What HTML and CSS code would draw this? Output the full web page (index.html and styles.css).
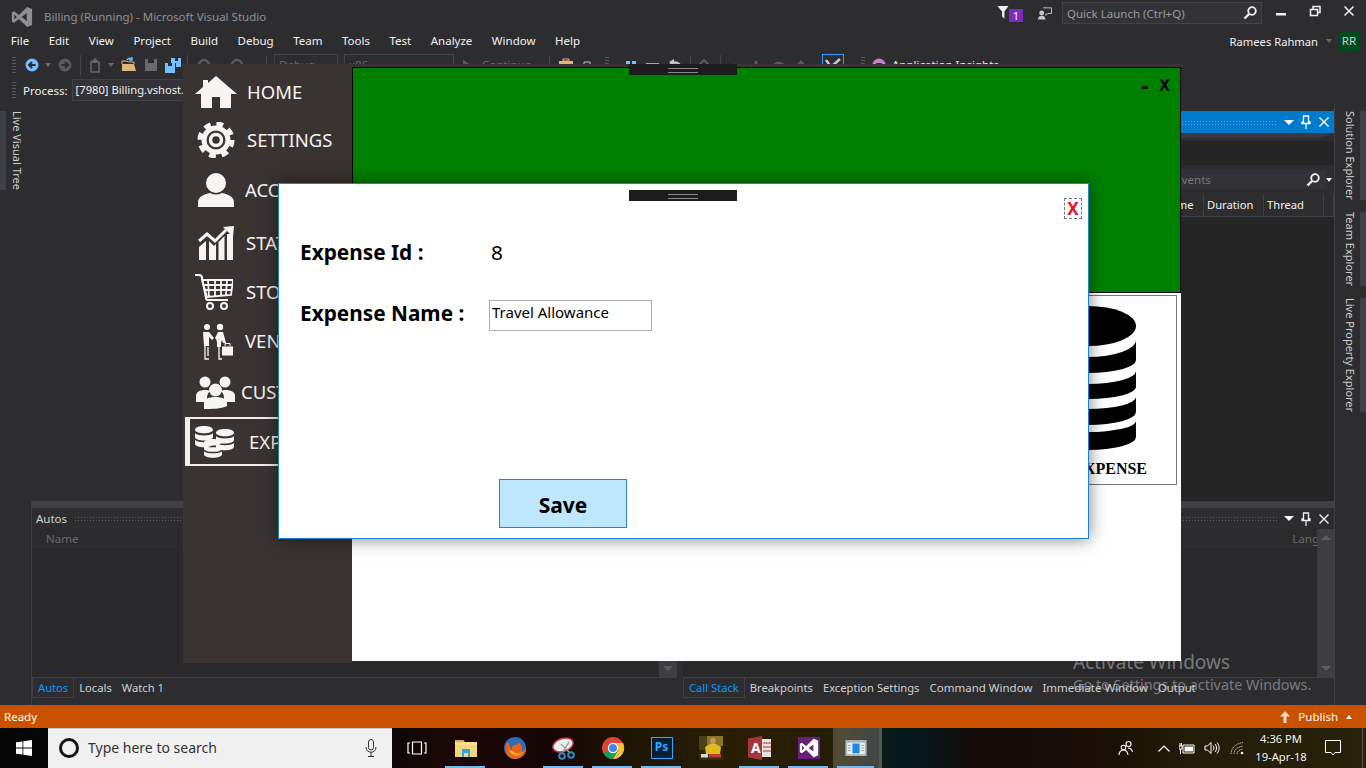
FILE: index.html
```html
<!DOCTYPE html>
<html lang="en">
<head>
    <meta charset="UTF-8">
    <meta name="viewport" content="width=device-width, initial-scale=1.0">
    <title>Billing (Running) - Microsoft Visual Studio</title>
    <link rel="stylesheet" href="styles.css">
</head>
<body>
    <svg class="defs" aria-hidden="true">
        <symbol id="vs-logo" viewBox="0 0 24 24"><path d="M17.6 1 8.6 9.7 3.4 5.6 1 6.8v10.4l2.4 1.2 5.2-4.1 9 8.7 5.4-2.2V3.2zM17.2 7.7v8.6L11.6 12zM3.6 9.2 6.4 12l-2.8 2.8z"/></symbol>
        <symbol id="coin" viewBox="0 0 20 24" preserveAspectRatio="none"><path d="M0 3.500C0 1.500 4.500 0 10 0s10 1.500 10 3.500S15.500 7 10 7 0 5.500 0 3.500zM0 7c2 1.500 6 2 10 2s8-.5 10-2v3.500c0 2-4.500 3.500-10 3.500S0 12.500 0 10.500zM0 13.500c2 1.500 6 2 10 2s8-.5 10-2V17c0 2-4.500 3.500-10 3.500S0 19 0 17z"/></symbol>
    </svg>

    <header class="title-bar">
        <svg class="vs-mark"><use href="#vs-logo"/></svg>
        <span class="title-text">Billing (Running) - Microsoft Visual Studio</span>
        <div class="title-tools">
            <svg class="filter-icon" viewBox="0 0 12 14"><path d="M0 0h12L7.500 6v8L5 11V6z"/></svg>
            <span class="badge">1</span>
            <svg class="feedback-icon" viewBox="0 0 16 14"><circle cx="5" cy="7" r="2.600" fill="#c8c8c8"/><path d="M1 14c0-3 2-4 4-4s4 1 4 4z" fill="#c8c8c8"/><path d="M6.500 1.500h9v6h-4l-2 2v-2" fill="none" stroke="#c8c8c8"/></svg>
            <div class="quick-launch">
                <span>Quick Launch (Ctrl+Q)</span>
                <svg class="search-glass" viewBox="0 0 14 14"><circle cx="9" cy="5" r="3.800" fill="none" stroke="#f1f1f1" stroke-width="1.800"/><path d="M6 8 1.500 12.500" stroke="#f1f1f1" stroke-width="2.400"/></svg>
            </div>
            <div class="win-buttons">
                <svg viewBox="0 0 34 22"><path d="M12 13h10v2.500H12z" fill="#f1f1f1"/></svg>
                <svg viewBox="0 0 34 22"><path d="M12.500 9.500h7v6h-7zM15 9V6.500h7v6h-2" fill="none" stroke="#f1f1f1" stroke-width="1.500"/></svg>
                <svg viewBox="0 0 34 22"><path d="M12.500 6.500l9 9m0-9-9 9" stroke="#f1f1f1" stroke-width="1.500"/></svg>
            </div>
        </div>
    </header>

    <nav class="menu-bar">
        <span>File</span><span>Edit</span><span>View</span><span>Project</span><span>Build</span><span>Debug</span><span>Team</span><span>Tools</span><span>Test</span><span>Analyze</span><span>Window</span><span>Help</span>
        <div class="account">
            <span class="account-name">Ramees Rahman</span>
            <i class="caret caret-dim"></i>
            <span class="avatar">RR</span>
        </div>
    </nav>

    <div class="toolbar toolbar-main">
        <i class="grip"></i>
        <svg class="tb-icon" viewBox="0 0 16 16"><circle cx="8" cy="8" r="6.500" fill="#75beff"/><path d="M11.500 8h-6M8 5 5 8l3 3" fill="none" stroke="#2d2d30" stroke-width="2"/></svg>
        <i class="caret caret-dim tb-caret"></i>
        <svg class="tb-icon tb-forward" viewBox="0 0 16 16"><circle cx="8" cy="8" r="6.500" fill="#5a5a5c"/><path d="M4.500 8h6M8 5l3 3-3 3" fill="none" stroke="#2d2d30" stroke-width="2"/></svg>
        <i class="tb-sep sep-a"></i>
        <svg class="tb-icon" viewBox="0 0 16 16"><path d="M4 5h8v10H4z M8 1v5M5.500 3.500h5" fill="none" stroke="#6a6a6c" stroke-width="1.500"/></svg>
        <i class="caret caret-dim tb-caret"></i>
        <svg class="tb-icon tb-open" viewBox="0 0 16 16"><path d="M1 7h12l2 7H1z" fill="#dcb67a"/><path d="M1 7V4h5l1 1h6v2" fill="none" stroke="#dcb67a"/><path d="M6 3c1-2 4-2.500 5-.5M11 0v3H8" fill="none" stroke="#75beff" stroke-width="1.300"/></svg>
        <svg class="tb-icon tb-save" viewBox="0 0 16 16"><path d="M2 2h12v12H2z" fill="#6a6a6c"/><path d="M5 2h6v4H5z" fill="#2d2d30"/></svg>
        <svg class="tb-icon tb-save" viewBox="0 0 16 16"><path d="M0 6h10v10H0z" fill="#75beff"/><path d="M6 1h10v9h-5V6H6z" fill="#75beff"/><path d="M3 6h4v3H3zM10 1h3v3h-3z" fill="#2d2d30"/></svg>
        <i class="tb-sep sep-b"></i>
        <svg class="tb-icon tb-undo" viewBox="0 0 16 16"><path d="M4 8a5 5 0 1 1 4 5" fill="none" stroke="#5a5a5c" stroke-width="2.500"/></svg>
        <svg class="tb-icon tb-redo" viewBox="0 0 16 16"><path d="M12 8a5 5 0 1 0-4 5" fill="none" stroke="#5a5a5c" stroke-width="2.500"/></svg>
        <i class="tb-sep sep-c"></i>
        <span class="tb-combo combo-config">Debug</span>
        <span class="tb-combo combo-platform">x86</span>
        <span class="tb-continue"><i class="play"></i>Continue</span>
        <i class="tb-sep"></i>
        <svg class="tb-icon tb-folder" viewBox="0 0 16 16"><path d="M1 4h14v10H1z" fill="#dcb67a"/><path d="M5 2h6v2H5z" fill="none" stroke="#dcb67a"/></svg>
        <svg class="tb-icon tb-monitor" viewBox="0 0 16 16"><path d="M1 10h14v4H1z" fill="#c8c8c8"/><path d="M5 10V5h6v5" fill="none" stroke="#c8c8c8"/></svg>
        <i class="grip grip-inline"></i>
        <svg class="tb-icon" viewBox="0 0 16 16"><path d="M3 4h4v12H3zM9 4h4v12H9z" fill="#75beff"/></svg>
        <svg class="tb-icon tb-stop" viewBox="0 0 16 16"><path d="M1 6h13v10H1z" fill="#f38b76"/></svg>
        <svg class="tb-icon tb-stop" viewBox="0 0 16 16"><path d="M3 10c0-4 5-6 9-3v7" fill="none" stroke="#c8c8c8" stroke-width="2.500"/><path d="M7 2v6L2 5z" fill="#c8c8c8"/></svg>
        <i class="tb-sep sep-e"></i>
        <svg class="tb-icon tb-reload" viewBox="0 0 16 16"><path d="M3 8l5-5 5 5M3 13l5-5 5 5" fill="none" stroke="#5a5a5c" stroke-width="2"/></svg>
        <i class="tb-sep sep-f"></i>
        <svg class="tb-icon tb-step" viewBox="0 0 16 16"><path d="M6 6l5 4-5 4z" fill="#5a5a5c"/></svg>
        <svg class="tb-icon tb-step-a" viewBox="0 0 16 16"><path d="M6.500 4h3v5h3l-4.500 5-4.500-5h3z" fill="#5a5a5c"/></svg>
        <svg class="tb-icon tb-step-b" viewBox="0 0 16 16"><path d="M2 12c1-8 11-8 12 0" fill="none" stroke="#5a5a5c" stroke-width="2.500"/></svg>
        <svg class="tb-icon tb-step-c" viewBox="0 0 16 16"><path d="M8 3l4.500 5h-3v6h-3V8h-3z" fill="#5a5a5c"/></svg>
        <span class="tb-box"><svg viewBox="0 0 20 20"><path d="M3 5l5 7 9-8M3 12l4 5M11 11l6 6" fill="none" stroke="#c8c8c8" stroke-width="2.500"/></svg></span>
        <i class="grip grip-box"></i>
        <svg class="tb-icon tb-insights" viewBox="0 0 16 16"><circle cx="8" cy="8" r="6.500" fill="#c586c0"/><path d="M5 6h6l-2 3v3H7V9z" fill="#2d2d30"/></svg>
        <span class="tb-label">Application Insights</span>
    </div>

    <div class="toolbar toolbar-process">
        <i class="grip"></i>
        <span class="process-label">Process:</span>
        <span class="process-combo">[7980] Billing.vshost.exe</span>
    </div>

    <main class="workspace">
        <aside class="rail rail-left">
            <span class="rail-tab">Live Visual Tree</span>
        </aside>

        <div class="center">
            <div class="top-area">
                <section class="tools-panel">
                    <div class="panel-head panel-head-active">
                        <i class="dots"></i>
                        <i class="caret caret-white"></i>
                        <svg class="pin" viewBox="0 0 10 14"><path d="M2.500 1h5v6h1.500v1.500H1V7h1.500zM5 8.500V14" fill="none" stroke="#fff" stroke-width="1.300"/></svg>
                        <svg class="cross" viewBox="0 0 10 10"><path d="M.5.5l9 9m0-9-9 9" stroke="#fff" stroke-width="1.400"/></svg>
                    </div>
                    <div class="tools-band"></div>
                    <div class="tools-graph"></div>
                    <div class="tools-search">
                        <span>Search Events</span>
                        <svg class="search-glass" viewBox="0 0 14 14"><circle cx="9" cy="5" r="3.800" fill="none" stroke="#f1f1f1" stroke-width="1.800"/><path d="M6 8 1.500 12.500" stroke="#f1f1f1" stroke-width="2.400"/></svg>
                        <i class="caret caret-light"></i>
                    </div>
                    <div class="tools-columns">
                        <span class="col-name">Name</span>
                        <span>Duration</span>
                        <span>Thread</span>
                        <span></span>
                    </div>
                </section>
            </div>

            <div class="bottom-area">
                <section class="dock dock-left">
                    <div class="dock-band"></div>
                    <div class="panel-head">
                        <span class="panel-title">Autos</span>
                        <i class="dots"></i>
                    </div>
                    <div class="dock-body">
                        <div class="dock-grid"><div class="grid-head"><span class="grid-name">Name</span></div></div>
                        <div class="scrollbar"><i class="arrow-down"></i></div>
                    </div>
                    <div class="dock-tabs">
                        <span class="tab tab-on">Autos</span><span class="tab">Locals</span><span class="tab">Watch 1</span>
                    </div>
                </section>
                <section class="dock dock-right">
                    <div class="dock-band"></div>
                    <div class="panel-head">
                        <i class="dots"></i>
                        <i class="caret caret-white"></i>
                        <svg class="pin" viewBox="0 0 10 14"><path d="M2.500 1h5v6h1.500v1.500H1V7h1.500zM5 8.500V14" fill="none" stroke="#f1f1f1" stroke-width="1.300"/></svg>
                        <svg class="cross" viewBox="0 0 10 10"><path d="M.5.5l9 9m0-9-9 9" stroke="#f1f1f1" stroke-width="1.400"/></svg>
                    </div>
                    <div class="dock-body">
                        <div class="dock-grid"><div class="grid-head grid-head-end"><span class="grid-lang">Lang</span></div></div>
                        <div class="scrollbar"><i class="arrow-up"></i><i class="arrow-down"></i></div>
                    </div>
                    <div class="dock-tabs">
                        <span class="tab tab-on">Call Stack</span><span class="tab">Breakpoints</span><span class="tab">Exception Settings</span><span class="tab tab-wide">Command Window</span><span class="tab tab-wide">Immediate Window</span><span class="tab">Output</span>
                    </div>
                </section>
            </div>
        </div>

        <aside class="rail rail-right">
            <span class="rail-tab">Solution Explorer</span>
            <span class="rail-tab">Team Explorer</span>
            <span class="rail-tab">Live Property Explorer</span>
        </aside>
    </main>

    <footer class="status-bar">
        <span>Ready</span>
        <div class="publish">
            <svg viewBox="0 0 10 12"><path d="M5 0l5 5.500H6.500V12h-3V5.500H0z" fill="#e8d6c8"/></svg>
            <span>Publish</span>
            <i class="caret caret-up"></i>
        </div>
    </footer>

    <div class="taskbar">
        <div class="start">
            <svg viewBox="0 0 16 16"><path d="M0 2.300 6.500 1.400v6.200H0zM7.300 1.300 16 0v7.600H7.300zM0 8.400h6.500v6.200L0 13.700zM7.300 8.400H16V16l-8.700-1.200z" fill="#fff"/></svg>
        </div>
        <div class="search-box">
            <i class="cortana"></i>
            <span>Type here to search</span>
            <svg viewBox="0 0 12 18"><rect x="3.500" y=".5" width="5" height="10.500" rx="2.500" fill="none" stroke="#333"/><path d="M1 8c0 7 10 7 10 0M6 13v4M3 17.500h6" fill="none" stroke="#333"/></svg>
        </div>
        <div class="task-item">
            <svg class="task-view" viewBox="0 0 20 14"><path d="M5.500 1h9v12h-9zM3 2H1v10h2M17 2h2v10h-2" fill="none" stroke="#fff" stroke-width="1.200"/></svg>
        </div>
        <div class="task-item running">
            <svg viewBox="0 0 24 22"><path d="M1 3h8l2 2h12v15H1z" fill="#f4d67a"/><path d="M1 3h8v2H1z" fill="#d9b04f"/><path d="M8 12h8v8h-2v-4h-4v4H8z" fill="#2fa8e0"/><path d="M1 7h22" stroke="#fbeeb5"/></svg>
        </div>
        <div class="task-item">
            <svg viewBox="0 0 24 24"><circle cx="12" cy="12" r="11" fill="#2c6cb8"/><path d="M4 6c-4 7 0 17 8 17s12-6 11-12c-1 3-3 4-4 4 1-4-1-7-4-9 1 3-1 3-3 3s-4 2-3 4-2 0-2-2c0-2-1-4-3-5z" fill="#e8641b"/><path d="M6 14c2 6 10 8 14 2-4 2-8 2-10-1z" fill="#f6a623"/></svg>
        </div>
        <div class="task-item running">
            <svg viewBox="0 0 24 24"><ellipse cx="11" cy="9" rx="10.500" ry="6.500" transform="rotate(-18 11 9)" fill="#eee" stroke="#b8313a" stroke-width="1.500"/><path d="M9 8l9 9M17 6l-6 10" stroke="#9aa4aa" stroke-width="1.500"/><circle cx="19" cy="19" r="2.800" fill="none" stroke="#2f87c8" stroke-width="2"/><circle cx="10" cy="20" r="2.800" fill="none" stroke="#2f87c8" stroke-width="2"/></svg>
        </div>
        <div class="task-item running">
            <svg viewBox="0 0 24 24"><circle cx="12" cy="12" r="11" fill="#db4437"/><path d="M12 12 2.500 17.500A11 11 0 0 0 12 23l5.500-7z" fill="#0f9d58"/><path d="M12 7h10a11 11 0 0 1-10 16l5.500-9z" fill="#fbc02d"/><circle cx="12" cy="12" r="5.200" fill="#fff"/><circle cx="12" cy="12" r="4" fill="#4285f4"/></svg>
        </div>
        <div class="task-item running">
            <span class="ps-icon">Ps</span>
        </div>
        <div class="task-item">
            <svg class="pes-icon" viewBox="0 0 24 24"><rect width="24" height="24" fill="#2b2410"/><path d="M0 0h24v10L0 14z" fill="#8a7722"/><path d="M0 0h8v14H0z" fill="#4a4014"/><circle cx="14" cy="4.500" r="2.800" fill="#c99468"/><path d="M6 11l6-3.500h4l6 3.500-1 7H7z" fill="#dcbc22"/><path d="M0 18h24v6H0z" fill="#2f2c1a"/><path d="M10 18h12v3.500H10z" fill="#c7372f"/><path d="M2 18h7v3.500H2z" fill="#d8d8d8"/></svg>
        </div>
        <div class="task-item running">
            <svg viewBox="0 0 24 24"><path d="M14 3h9v18h-9z" fill="#e7e2e2"/><path d="M15 7h8M15 11h8M15 15h8" stroke="#a4373a"/><path d="M0 2.500 14 0v24L0 21.500z" fill="#a4373a"/></svg>
            <span class="access-a">A</span>
        </div>
        <div class="task-item running">
            <svg viewBox="0 0 24 24"><rect x="1" y="1" width="22" height="22" fill="#68217a"/><use href="#vs-logo" x="2" y="2" width="20" height="20" fill="#fff"/></svg>
        </div>
        <div class="task-item running active">
            <svg class="app-icon" viewBox="0 0 24 18"><path d="M0 0h24v18H0z" fill="#a9b3b8"/><path d="M2 3h20v13H2z" fill="#e8eef1"/><path d="M8 4h8v11H8z" fill="#1e88e5"/><path d="M3 6h3M3 9h3M3 12h3M18 6h3M18 9h3M18 12h3" stroke="#8aa0ad"/></svg>
        </div>
        <div class="tray">
            <svg class="tray-people" viewBox="0 0 16 16"><circle cx="10.500" cy="4" r="2.500" fill="none" stroke="#fff" stroke-width="1.100"/><circle cx="5.500" cy="7.500" r="2.300" fill="none" stroke="#fff" stroke-width="1.100"/><path d="M1 15c0-3 2-5 4.500-5s4 2 4.500 5M10 8c2 0 4 1.500 4.500 4" fill="none" stroke="#fff" stroke-width="1.100"/></svg>
            <svg class="tray-chevron" viewBox="0 0 12 7"><path d="M.5 6.500 6 1l5.500 5.500" fill="none" stroke="#fff" stroke-width="1.200"/></svg>
            <svg class="tray-battery" viewBox="0 0 16 11"><path d="M4 2h11v8H4z" fill="none" stroke="#fff"/><path d="M5.500 3.500H14v5H5.500z" fill="#fff"/><path d="M0 3v3h3V3zM1 3V0M2.500 3V0M1.500 6v5" stroke="#fff" fill="none"/></svg>
            <svg class="tray-volume" viewBox="0 0 16 14"><path d="M1 5h2.500L7 1.500v11L3.500 9H1z" fill="none" stroke="#fff"/><path d="M9 4.500c1.200 1.500 1.200 3.500 0 5M11 3c2 2.500 2 5.500 0 8M13 1.500c2.800 3.500 2.800 7.500 0 11" fill="none" stroke="#fff"/></svg>
            <svg class="tray-wifi" viewBox="0 0 14 14"><path d="M1 13C1 7 6 2.500 13 1.500M4 13c0-4 3-7 9-8M7 13c0-2.500 2-4 6-5" fill="none" stroke="#b9b9b9" stroke-dasharray="1.500 .6"/><circle cx="12" cy="12" r="1.300" fill="#fff"/></svg>
            <div class="clock"><span>4:36 PM</span><span>19-Apr-18</span></div>
            <svg class="tray-note" viewBox="0 0 16 16"><path d="M.5.5h15v12H10l-2 2.500-2-2.500H.5z" fill="none" stroke="#fff"/></svg>
            <i class="show-desktop"></i>
        </div>
    </div>

    <div class="activate">
        <p class="activate-title">Activate Windows</p>
        <p class="activate-note">Go to Settings to activate Windows.</p>
    </div>

    <!-- the running Billing app, floats over the IDE -->
    <div class="app-window">
        <i class="drag-handle handle-main"></i>
        <nav class="side-nav">
            <a class="nav-item">
                <span class="nav-icon"><svg width="42" height="32" viewBox="0 0 42 32"><path d="M21 0 42 18h-6v14H25V21h-8v11H6V18H0l8-7V4h5v3z" fill="#f7f5f4"/></svg></span>
                <span class="nav-text text-wide">HOME</span>
            </a>
            <a class="nav-item">
                <span class="nav-icon"><svg width="42" height="36" viewBox="-21 -18 42 36"><circle r="12" fill="none" stroke="#f7f5f4" stroke-width="5"/><circle r="15.500" fill="none" stroke="#f7f5f4" stroke-width="6" stroke-dasharray="6.500 5.670"/><circle r="5.500" fill="none" stroke="#f7f5f4" stroke-width="3.500"/></svg></span>
                <span class="nav-text text-wide">SETTINGS</span>
            </a>
            <a class="nav-item">
                <span class="nav-icon"><svg width="36" height="34" viewBox="0 0 36 34"><ellipse cx="18" cy="10" rx="10" ry="10" fill="#f7f5f4"/><path d="M0 34v-5c0-5 6-8 12-9 4 2 8 2 12 0 6 1 12 4 12 9v5z" fill="#f7f5f4"/></svg></span>
                <span class="nav-text text-acc">ACC</span>
            </a>
            <a class="nav-item">
                <span class="nav-icon"><svg width="36" height="34" viewBox="0 0 36 34" fill="#f7f5f4"><path d="M1 21l7-6v19H1zM11 15l5 5 2-2v16h-7zM20.500 16l6-6v24h-6zM29 8h6v26h-6z"/><path d="M1 15l8-7 8 7 11-11" fill="none" stroke="#f7f5f4" stroke-width="3"/><path d="M25 1 36 0l-1 11z"/></svg></span>
                <span class="nav-text">STAT</span>
            </a>
            <a class="nav-item">
                <span class="nav-icon icon-cart"><svg width="38" height="36" viewBox="0 0 38 36"><path d="M0 1h4c2 0 3 1 3 3l4 20c0 1 1 2 2 2h20" fill="none" stroke="#f7f5f4" stroke-width="2"/><path d="M7 6h31l-2 15-24 2zM13 6l1 17M20 6v16M26 6v15M32 6l-1 15M8 11h29M9 16h27" fill="none" stroke="#f7f5f4" stroke-width="1.800"/><circle cx="15" cy="32" r="3" fill="none" stroke="#f7f5f4" stroke-width="2"/><circle cx="29" cy="32" r="3" fill="none" stroke="#f7f5f4" stroke-width="2"/></svg></span>
                <span class="nav-text">STO</span>
            </a>
            <a class="nav-item">
                <span class="nav-icon icon-vendor"><svg width="32" height="37" viewBox="0 0 32 37" fill="#f7f5f4"><circle cx="5" cy="4" r="3"/><circle cx="18" cy="4" r="3.200"/><path d="M1 9h6l5 6-2 2-3-3v9H2z"/><path d="M13 15l3-6h5l3 11h-3l-1-3-1 3v4h-4v-5l-1-3z"/><path d="M3 23v13h4M6 24v9M17 24v12h3M21 24v6" fill="none" stroke="#f7f5f4" stroke-width="1.300"/><path d="M19.500 23h12v10h-12z" stroke="#393432"/><path d="M23 23v-2.500h5V23" fill="none" stroke="#f7f5f4"/></svg></span>
                <span class="nav-text text-ven">VEN</span>
            </a>
            <a class="nav-item">
                <span class="nav-icon"><svg width="39" height="33" viewBox="0 0 39 33"><circle cx="9" cy="6" r="5.500" fill="#f7f5f4"/><circle cx="29" cy="6" r="5.500" fill="#f7f5f4"/><path d="M0 26v-6c0-4 4-6 9-6 2 0 4 0 5 1-2 2-3 4-3 7v4zM39 26v-6c0-4-4-6-9-6-2 0-4 0-5 1 2 2 3 4 3 7v4z" fill="#f7f5f4"/><circle cx="19.500" cy="14" r="6.500" fill="#f7f5f4"/><path d="M8 33v-6c0-4 5-6 11.500-6S31 23 31 27v3c-6 3-16 3-23 3z" fill="#f7f5f4"/></svg></span>
                <span class="nav-text text-cust">CUST</span>
            </a>
            <a class="nav-item nav-active">
                <span class="nav-icon icon-coins"><svg width="39" height="32" viewBox="0 0 39 32" fill="#f7f5f4"><use href="#coin" x="0" y="0" width="18" height="25"/><use href="#coin" x="21" y="3" width="18" height="25"/><use href="#coin" x="9" y="13" width="18" height="22"/></svg></span>
                <span class="nav-text text-exp">EXP</span>
            </a>
        </nav>
        <div class="app-content">
            <div class="app-banner">
                <div class="app-controls"><span class="app-min">-</span><span>X</span></div>
            </div>
            <div class="tiles">
                <div class="tile">
                    <svg class="tile-db" width="96" height="145" viewBox="0 0 96 145"><ellipse cx="48" cy="21" rx="48" ry="20"/><path d="M0 35A48 17 0 0 0 96 35V55A48 13 0 0 1 0 55Z"/><path d="M0 66A48 13 0 0 0 96 66V82A48 12 0 0 1 0 82Z"/><path d="M0 92A48 12 0 0 0 96 92V107A48 13 0 0 1 0 107Z"/><path d="M0 116A48 11 0 0 0 96 116V132A48 13 0 0 1 0 132Z"/></svg>
                    <span class="tile-label">EXPENSE</span>
                </div>
            </div>
        </div>
    </div>

    <div class="modal">
        <i class="drag-handle handle-modal"></i>
        <button class="modal-close">X</button>
        <div class="form-row">
            <label>Expense Id :</label>
            <span class="form-value">8</span>
        </div>
        <div class="form-row">
            <label>Expense Name :</label>
            <input class="form-input" type="text" value="Travel Allowance">
        </div>
        <button class="btn-save">Save</button>
    </div>
</body>
</html>
```

FILE: styles.css
```css
* {
    box-sizing: border-box;
}

html, body {
    height: 100%;
}

body {
    margin: 0;
    width: 1366px;
    height: 768px;
    overflow: hidden;
    position: relative;
    display: flex;
    flex-direction: column;
    background: #2d2d30;
    color: #f1f1f1;
    font-family: "Noto Sans", "Open Sans", sans-serif;
    font-size: 12px;
}

i {
    display: block;
}

svg {
    display: block;
    flex: none;
}

.defs {
    position: absolute;
    width: 0;
    height: 0;
}

/* title + menu */
.title-bar {
    height: 30px;
    display: flex;
    align-items: flex-start;
}

.vs-mark {
    width: 22px;
    height: 22px;
    margin: 6px 0 0 11px;
    fill: #8f8f92;
}

.title-text {
    margin: 9px 0 0 11px;
    color: #8f8f92;
    font-size: 11.5px;
}

.title-tools {
    margin-left: auto;
    display: flex;
    align-items: flex-start;
}

.filter-icon {
    width: 14px;
    height: 13px;
    margin-top: 6px;
    fill: #f1f1f1;
}

.badge {
    width: 14px;
    height: 13px;
    margin: 9px 0 0 -1px;
    background: #7b2fb8;
    text-align: center;
    line-height: 13px;
    font-size: 11px;
}

.feedback-icon {
    width: 15px;
    height: 14px;
    margin: 6px 0 0 14px;
}

.quick-launch {
    width: 200px;
    height: 22px;
    margin: 2px 0 0 10px;
    padding: 0 4px;
    display: flex;
    align-items: center;
    justify-content: space-between;
    background: #333337;
    border: 1px solid #434346;
    color: #999;
    font-size: 11.5px;
}

.search-glass {
    width: 14px;
    height: 14px;
}

.win-buttons {
    display: flex;
    margin-left: 2px;
}

.win-buttons svg {
    width: 34px;
    height: 22px;
}

.menu-bar {
    height: 22px;
    display: flex;
    align-items: center;
    padding-left: 1px;
    font-size: 11.5px;
}

.menu-bar > span {
    padding: 0 9.75px;
    margin-bottom: 2px;
}

.account {
    margin-left: auto;
    margin-right: 7px;
    display: flex;
    align-items: center;
    height: 20px;
}

.account-name {
    font-size: 11.2px;
}

.avatar {
    width: 20px;
    height: 20px;
    margin-left: 7px;
    background: #004b1c;
    color: #ccc;
    text-align: center;
    line-height: 19px;
    font-size: 11.5px;
}

.caret {
    width: 0;
    height: 0;
    border-left: 3.500px solid transparent;
    border-right: 3.500px solid transparent;
    border-top: 4px solid #f1f1f1;
}

.caret-dim {
    border-top-color: #6a6a6c;
    margin-left: 8px;
}

.caret-white {
    border-left-width: 5px;
    border-right-width: 5px;
    border-top-width: 5px;
    border-top-color: #fff;
}

.caret-up {
    border-top: 0;
    border-bottom: 4px solid #fff;
    margin-left: 8px;
}

/* toolbars */
.toolbar {
    display: flex;
    align-items: center;
    padding-left: 12px;
}

.toolbar-main {
    height: 25px;
}

.toolbar-process {
    height: 26px;
}

.grip {
    width: 4px;
    height: 18px;
    background-image: radial-gradient(#5a5a5c 0.7px, transparent 0.8px);
    background-size: 2px 3px;
}

.tb-icon {
    width: 16px;
    height: 16px;
}

.toolbar-main > .grip:first-child {
    margin-right: 8px;
}

.tb-caret {
    margin-left: 5px;
}

.tb-forward {
    margin-left: 6px;
}

.tb-sep {
    width: 1px;
    height: 20px;
    background: #46464a;
}

.sep-a {
    margin: 0 6px 0 7px;
}

.tb-open {
    margin-left: 7px;
}

.tb-save {
    margin-left: 6px;
}

.sep-b {
    margin-left: 6px;
}

.tb-undo {
    margin-left: 7px;
}

.tb-redo {
    margin-left: 19px;
}

.sep-c {
    margin: 0 7px 0 20px;
}

.tb-combo {
    height: 22px;
    padding: 2px 4px;
    border: 1px solid #434346;
    color: #6a6a6c;
    font-size: 11.5px;
}

.combo-config {
    width: 64px;
}

.combo-platform {
    width: 110px;
    margin-left: 6px;
}

.tb-continue {
    width: 95px;
    padding-left: 9px;
    display: flex;
    align-items: center;
    color: #6a6a6c;
    font-size: 11.5px;
}

.play {
    margin-right: 11px;
    border-left: 8px solid #5a5a5c;
    border-top: 5px solid transparent;
    border-bottom: 5px solid transparent;
}

.tb-folder {
    margin-left: 8px;
}

.tb-monitor {
    margin-left: 5px;
}

.grip-inline {
    margin: 0 14px 0 10px;
}

.tb-stop {
    margin-left: 6px;
}

.sep-e {
    margin-left: 7px;
}

.tb-reload {
    margin-left: 5px;
}

.sep-f {
    margin-left: 8px;
}

.tb-step {
    margin-left: 7px;
}

.tb-step-a {
    margin-left: 4px;
}

.tb-step-b {
    margin-left: 7px;
}

.tb-step-c {
    margin-left: 6px;
}

.tb-box {
    width: 22px;
    height: 22px;
    margin-left: 13px;
    border: 1px solid #3399ff;
}

.grip-box {
    margin-left: 17px;
}

.tb-insights {
    margin-left: 6px;
}

.tb-label {
    margin-left: 5px;
    font-size: 11.5px;
}

.process-label {
    margin-left: 7px;
    font-size: 11.5px;
}

.process-combo {
    width: 200px;
    height: 22px;
    margin-left: 4px;
    padding: 2px 3px;
    background: #333337;
    border: 1px solid #434346;
    font-size: 11.2px;
}

/* main dock layout */
.workspace {
    flex: 1;
    display: flex;
    min-height: 0;
}

.rail {
    width: 31px;
    flex: none;
    padding-top: 8px;
    display: flex;
    flex-direction: column;
    gap: 12px;
}

.rail-right {
    width: 32px;
    border-left: 1px solid #3f3f46;
    margin-left: -1px;
}

.rail-tab {
    writing-mode: vertical-rl;
    color: #d0d0d0;
    font-size: 11px;
    line-height: 19px;
}

.rail-left .rail-tab {
    border-left: 6px solid #3f3f46;
    padding-left: 2px;
    align-self: flex-start;
}

.rail-right .rail-tab {
    border-right: 6px solid #3f3f46;
    padding-left: 3px;
}

.center {
    flex: 1;
    display: flex;
    flex-direction: column;
    min-width: 0;
}

.top-area {
    height: 398px;
    display: flex;
    justify-content: flex-end;
}

.tools-panel {
    width: 314px;
    margin-top: 8px;
    background: #252526;
}

.panel-head {
    height: 21px;
    display: flex;
    align-items: center;
    gap: 7px;
    padding: 0 4px;
    background: #2d2d30;
}

.panel-head-active {
    height: 22px;
    background: #007acc;
}

.dots {
    flex: 1;
    height: 5px;
    background-image: radial-gradient(#5d5d60 0.7px, transparent 0.8px);
    background-size: 3px 3px;
}

.panel-head-active .dots {
    background-image: radial-gradient(#59a8e0 0.7px, transparent 0.8px);
}

.pin {
    width: 10px;
    height: 14px;
}

.cross {
    width: 10px;
    height: 10px;
    margin: 0 2px 0 1px;
}

.tools-band {
    height: 8px;
    background: #2d2d30;
    border-top: 5px solid #3a3a3e;
    border-right: 17px solid #2d2d30;
}

.tools-graph {
    height: 24px;
    background: #252526;
}

.tools-search {
    height: 29px;
    padding: 5px 3px 5px 0;
    display: flex;
    align-items: center;
    gap: 4px;
    background: #2d2d30;
    color: #777;
}

.tools-search span {
    flex: 1;
    height: 19px;
    padding-left: 115px;
    background: #333337;
    line-height: 19px;
    font-size: 11.5px;
}

.tools-search .search-glass {
    margin-left: -24px;
}

.caret-light {
    margin-left: 2px;
}

.tools-columns {
    height: 23px;
    display: grid;
    grid-template-columns: 183px 60px 60px 1fr;
    border-bottom: 1px solid #3f3f46;
    border-right: 1px solid #3f3f46;
    background: #2d2d30;
    line-height: 21px;
    font-size: 11.2px;
}

.tools-columns span {
    padding-left: 3px;
    border-right: 1px solid #3f3f46;
}

.tools-columns .col-name {
    padding-left: 141px;
}

.bottom-area {
    flex: 1;
    display: flex;
    gap: 6px;
}

.dock {
    display: flex;
    flex-direction: column;
    border-left: 1px solid #3f3f46;
}

.dock-left {
    width: 646px;
}

.dock-right {
    flex: 1;
    border-left: 0;
}

.dock-band {
    height: 7px;
    background: #3f3f46;
}

.panel-title {
    color: #d0d0d0;
    font-size: 11.5px;
}

.dock-body {
    flex: 1;
    display: flex;
    background: #29292b;
    min-height: 0;
    border-bottom: 1px solid #3f3f46;
}

.dock-grid {
    flex: 1;
}

.grid-head {
    height: 19px;
    border-bottom: 1px solid #2f2f32;
    padding-left: 14px;
    color: #6a6a6c;
    font-size: 11.5px;
    line-height: 19px;
    background: #2a2a2c;
}

.grid-head-end {
    display: flex;
    justify-content: flex-end;
    overflow: hidden;
}

.grid-lang {
    margin-right: -2px;
}

.scrollbar {
    width: 18px;
    display: flex;
    flex-direction: column;
    align-items: center;
    justify-content: space-between;
    padding: 6px 0;
    background: #3e3e42;
}

.dock-left .scrollbar {
    justify-content: flex-end;
}

.arrow-up {
    border-left: 5px solid transparent;
    border-right: 5px solid transparent;
    border-bottom: 5px solid #5d5d60;
}

.arrow-down {
    border-left: 5px solid transparent;
    border-right: 5px solid transparent;
    border-top: 5px solid #5d5d60;
}

.dock-tabs {
    height: 27px;
    padding-bottom: 7px;
    display: flex;
    align-items: stretch;
    color: #d0d0d0;
    font-size: 11.2px;
}

.tab {
    padding: 0 5px;
    line-height: 20px;
}

.tab-wide {
    font-size: 11.5px;
}

.tab-on {
    color: #0e97f0;
    background: #2d2d30;
    border: 1px solid #3f3f46;
    border-top: 0;
    line-height: 19px;
}

/* status + windows taskbar */
.status-bar {
    height: 23px;
    flex: none;
    display: flex;
    align-items: center;
    justify-content: space-between;
    padding: 0 14px 0 4px;
    background: #ca5100;
    color: #fff;
    font-size: 11.5px;
}

.publish {
    display: flex;
    align-items: center;
    gap: 8px;
}

.publish svg {
    width: 10px;
    height: 12px;
}

.publish .caret-up {
    margin-left: 0;
}

.taskbar {
    height: 40px;
    flex: none;
    display: flex;
    align-items: stretch;
    background: linear-gradient(90deg, #070707 0%, #0a0808 28%, #1c0705 33%, #140504 40%, #1f1505 46%, #2a1f04 55%, #241c04 62%, #131a14 64%, #041a1e 66%, #150a08 72%, #1a0e06 80%, #251c08 88%, #272208 100%);
}

.start {
    width: 48px;
    display: flex;
    align-items: center;
    justify-content: center;
}

.start svg {
    width: 16px;
    height: 16px;
}

.search-box {
    width: 344px;
    display: flex;
    align-items: center;
    padding: 0 15px 2px 11px;
    background: #f0f0f0;
    border-top: 1px solid #c8c8c8;
    color: #333;
    font-size: 14px;
}

.search-box span {
    flex: 1;
    margin-left: 9px;
}

.search-box svg {
    width: 12px;
    height: 18px;
}

.cortana {
    width: 20px;
    height: 20px;
    border-radius: 50%;
    border: 3px solid #151515;
}

.task-item {
    width: 49px;
    position: relative;
    display: flex;
    align-items: center;
    justify-content: center;
}

.task-item svg {
    width: 24px;
    height: 24px;
}

.task-item .task-view {
    width: 20px;
    height: 14px;
}

.task-item .app-icon {
    width: 22px;
    height: 16px;
}

.running::after {
    content: "";
    position: absolute;
    left: 4px;
    right: 5px;
    bottom: 0;
    height: 2px;
    background: #76b9ed;
}

.active {
    background: rgba(255, 255, 255, 0.2);
    border-right: 3px solid rgba(255, 255, 255, 0.1);
}

.ps-icon {
    width: 22px;
    height: 22px;
    border: 1.500px solid #31a8ff;
    background: #001e36;
    color: #31a8ff;
    text-align: center;
    line-height: 18px;
    font-size: 12px;
    font-weight: 700;
}

.access-a {
    position: absolute;
    left: 16px;
    top: 10px;
    color: #fff;
    font-size: 14px;
    font-weight: 700;
}

.tray {
    flex: 1;
    display: flex;
    align-items: center;
    position: relative;
}

.tray-people {
    width: 16px;
    height: 16px;
    margin-left: 236px;
}

.tray-chevron {
    width: 12px;
    height: 7px;
    margin-left: 24px;
}

.tray-battery {
    width: 16px;
    height: 11px;
    margin-left: 9px;
}

.tray-volume {
    width: 16px;
    height: 14px;
    margin-left: 9px;
}

.tray-wifi {
    width: 14px;
    height: 14px;
    margin-left: 10px;
}

.clock {
    width: 60px;
    margin-left: 7px;
    display: flex;
    flex-direction: column;
    align-items: center;
    line-height: 18px;
    font-size: 11.2px;
    color: #f4f4f4;
}

.tray-note {
    width: 16px;
    height: 16px;
    margin-left: 14px;
}

.show-desktop {
    width: 1px;
    height: 100%;
    margin-left: 21px;
    background: #555;
}

.activate {
    position: absolute;
    left: 1073px;
    top: 649px;
    color: rgba(200, 200, 200, 0.5);
    pointer-events: none;
}

.activate p {
    margin: 0;
}

.activate-title {
    font-size: 19px;
    line-height: 26px;
}

.activate-note {
    font-size: 14.4px;
    line-height: 20px;
}

/* app window */
.app-window {
    position: absolute;
    left: 183px;
    top: 64px;
    width: 1000px;
    height: 599px;
    display: flex;
    align-items: flex-start;
}

.drag-handle {
    position: absolute;
    width: 108px;
    height: 11px;
    background: #1c1c1c;
}

.drag-handle::after {
    content: "";
    position: absolute;
    left: 39px;
    top: 4px;
    width: 30px;
    height: 3px;
    border-top: 1px solid #8a8a8a;
    border-bottom: 1px solid #8a8a8a;
}

.handle-main {
    left: 446px;
    top: 0;
}

.handle-modal {
    left: 350px;
    top: 6px;
}

.side-nav {
    width: 169px;
    height: 599px;
    flex: none;
    padding: 4px 0 0 2px;
    display: grid;
    grid-template-rows: 48px 48px 52px 54px 44px 54px 49px 49px;
    align-content: start;
    background: #393432;
}

.nav-item {
    display: flex;
    align-items: center;
    color: #f4f2f1;
    font-size: 18.5px;
}

.nav-icon {
    width: 61px;
    display: flex;
    justify-content: center;
}

.nav-text {
    margin-bottom: 2px;
}

.text-wide {
    margin-left: 1px;
}

.icon-cart {
    padding-right: 3px;
}

.icon-vendor {
    padding-left: 4px;
}

.text-acc,
.text-ven {
    margin-left: -1px;
}

.text-cust {
    margin-left: -5px;
}

.nav-active {
    border: 2px solid #f0eeee;
    border-left-width: 5px;
    border-right: 0;
}

.icon-coins {
    width: 54px;
    padding-right: 6px;
}

.text-exp {
    margin: 0 0 0 5px;
}

.app-content {
    width: 831px;
    height: 597px;
    padding-right: 2px;
    border-top: 3px solid #393432;
    display: flex;
    flex-direction: column;
}

.app-banner {
    height: 226px;
    flex: none;
    background: #008000;
    border: 1px solid #000;
}

.app-controls {
    display: flex;
    justify-content: flex-end;
    align-items: flex-start;
    gap: 11px;
    padding: 6px 10px 0 0;
    color: #000;
    font-size: 16px;
    font-weight: 700;
}

.app-min {
    font-size: 21px;
    line-height: 23px;
}

.tiles {
    flex: 1;
    display: flex;
    justify-content: flex-end;
    padding: 2px 4px 0 0;
    background: #fff;
}

.tile {
    width: 177px;
    height: 190px;
    border: 1px solid #777;
    padding-top: 9px;
    display: flex;
    flex-direction: column;
    background: #fff;
}

.tile-db {
    margin-left: 39px;
    fill: #000;
}

.tile-label {
    margin-top: 10px;
    padding-right: 29px;
    text-align: right;
    color: #000;
    font-family: "Liberation Serif", serif;
    font-size: 16px;
    font-weight: 700;
}

/* expense dialog */
.modal {
    position: absolute;
    left: 278px;
    top: 183px;
    width: 811px;
    height: 356px;
    padding: 48px 0 10px 21px;
    display: flex;
    flex-direction: column;
    gap: 21px;
    background: #fff;
    border: 1px solid #1e82d2;
    box-shadow: 0 0 16px rgba(0, 0, 0, 0.5);
    color: #000;
}

.modal-close {
    position: absolute;
    right: 6px;
    top: 14px;
    width: 18px;
    height: 21px;
    padding: 0;
    background: #fff;
    border: 1px dashed #777;
    color: #f01020;
    font-family: inherit;
    font-size: 17px;
    font-weight: 700;
    line-height: 18px;
}

.form-row {
    height: 40px;
    display: grid;
    grid-template-columns: 189px 1fr;
    align-items: center;
}

.form-row label {
    font-size: 20.8px;
    font-weight: 700;
}

.form-value {
    padding-left: 2px;
    font-size: 20.8px;
}

.form-input {
    width: 163px;
    height: 31px;
    margin-top: 4px;
    padding: 0 2px 7px;
    border: 1px solid #abadb3;
    border-radius: 0;
    outline: none;
    color: #000;
    font-family: inherit;
    font-size: 15px;
}

.btn-save {
    width: 128px;
    height: 49px;
    margin: auto 0 0 199px;
    padding-top: 4px;
    background: #bee6fd;
    border: 1px solid #3c7fb1;
    color: #000;
    font-family: inherit;
    font-size: 21px;
    font-weight: 700;
}
```
